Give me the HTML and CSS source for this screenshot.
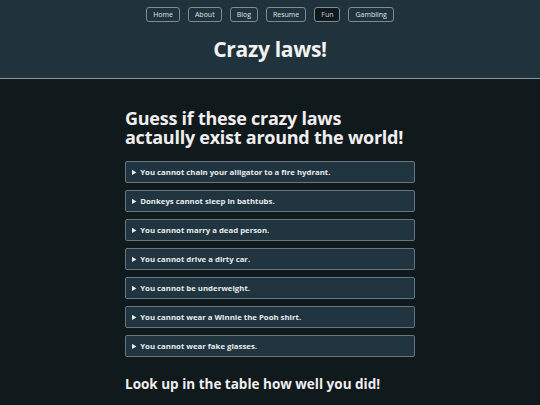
FILE: index.html
```html
<!DOCTYPE html>
<html>
<head>
<meta charset="utf-8">
<link rel="stylesheet" href="styles.css">
</head>
<body>
<header class="top">
  <nav class="nav">
    <a class="btn" href="#">Home</a>
    <a class="btn" href="#">About</a>
    <a class="btn" href="#">Blog</a>
    <a class="btn" href="#">Resume</a>
    <a class="btn active" href="#">Fun</a>
    <a class="btn" href="#">Gambling</a>
  </nav>
  <h1 class="title">Crazy laws!</h1>
</header>
<main class="main">
  <h2 class="lead">Guess if these crazy laws actaully exist around the world!</h2>
  <details class="law"><summary>You cannot chain your alligator to a fire hydrant.</summary><p>True</p></details>
  <details class="law"><summary>Donkeys cannot sleep in bathtubs.</summary><p>True</p></details>
  <details class="law"><summary>You cannot marry a dead person.</summary><p>False</p></details>
  <details class="law"><summary>You cannot drive a dirty car.</summary><p>True</p></details>
  <details class="law"><summary>You cannot be underweight.</summary><p>False</p></details>
  <details class="law"><summary>You cannot wear a Winnie the Pooh shirt.</summary><p>True</p></details>
  <details class="law"><summary>You cannot wear fake glasses.</summary><p>True</p></details>
  <h2 class="sub">Look up in the table how well you did!</h2>
</main>
</body>
</html>
```
FILE: styles.css
```css
html, body {
  margin: 0;
  padding: 0;
}
body {
  background: #10191c;
  color: #eceff0;
  font-family: "Open Sans", "Noto Sans", sans-serif;
  overflow: hidden;
}
.top {
  background: #20333d;
  border-bottom: 1px solid #8a969c;
  height: 78px;
  box-sizing: content-box;
  display: flex;
  flex-direction: column;
  align-items: center;
}
.nav {
  display: flex;
  gap: 8px;
  padding-top: 7px;
}
.btn {
  display: block;
  height: 15px;
  line-height: 13px;
  box-sizing: border-box;
  padding: 0 6px;
  border: 1px solid #7e8c92;
  border-radius: 3px;
  font-size: 7px;
  color: #dfe5e7;
  text-decoration: none;
}
.btn.active {
  background: #10191c;
  color: #c9d3d6;
}
.title {
  margin: 12px 0 0;
  font-size: 21px;
  letter-spacing: -0.3px;
  line-height: 30px;
  font-weight: 700;
  color: #f2f2f2;
}
.main {
  width: 290px;
  margin: 0 auto;
  padding-top: 30px;
}
.lead {
  margin: 0 0 14px;
  font-size: 18px;
  letter-spacing: -0.25px;
  line-height: 19px;
  font-weight: 700;
  color: #f0eeee;
}
.law {
  background: #203540;
  border: 1px solid #66767d;
  border-radius: 2px;
  margin-bottom: 7px;
}
.law summary {
  height: 20px;
  line-height: 20px;
  padding: 0 6px;
  font-size: 7.8px;
  font-weight: 700;
  color: #e8ebec;
  cursor: pointer;
}
.law p {
  margin: 0;
  padding: 0 8px 6px;
  font-size: 8px;
}
.sub {
  margin: 17px 0 0;
  font-size: 13.5px;
  line-height: 20px;
  font-weight: 700;
  color: #f0eeee;
}
```
